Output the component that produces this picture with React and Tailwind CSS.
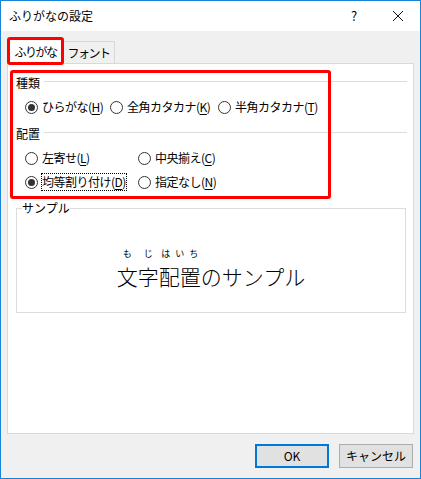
import React from "react";

const font = "font-['Noto_Sans_CJK_JP','Noto_Sans',sans-serif]";

const Radio = ({ checked }) => (
  <span className="w-[13px] h-[13px] rounded-full border border-[#333333] bg-white flex items-center justify-center shrink-0">
    {checked && <span className="w-[7px] h-[7px] rounded-full bg-[#333333]" />}
  </span>
);

const Option = ({ checked, label, keyChar, width, focus }) => (
  <label className={`flex items-center gap-[4px] shrink-0 ${width}`}>
    <Radio checked={checked} />
    <span className={`leading-[16px] tracking-[-0.5px] ${focus ? "outline outline-1 outline-dotted outline-black" : ""}`}>
      {label}(<span className="underline underline-offset-2">{keyChar}</span>)
    </span>
  </label>
);

const SectionHeader = ({ title }) => (
  <div className="flex items-center h-[16px] gap-[4px]">
    <span className="leading-[16px]">{title}</span>
    <div className="flex-1 h-px bg-[#dcdcdc] mt-[-3px]" />
  </div>
);

const Ruby = ({ base, reading, spread }) => (
  <span className="flex flex-col items-stretch">
    <span className={`flex h-[10px] text-[9px] leading-[10px] ${spread ? "justify-around" : "justify-center"}`}>
      {reading.split("").map((c, i) => (
        <span key={i}>{c}</span>
      ))}
    </span>
    <span className="mt-[5px] text-[21px] leading-[24px] font-light">{base}</span>
  </span>
);

export default function App() {
  return (
    <div className={`w-[421px] h-[479px] border border-[#1883d7] bg-[#f0f0f0] flex flex-col text-[12px] text-black ${font}`}>
      {/* title bar */}
      <div className="h-[30px] bg-white flex items-center pl-[8px] shrink-0">
        <span className="flex-1 leading-[16px]">ふりがなの設定</span>
        <span className="w-[16px] text-center text-[13px] mr-[30px]">?</span>
        <svg width="12" height="12" viewBox="0 0 12 12" className="mr-[16px]">
          <path d="M1 1 L11 11 M11 1 L1 11" stroke="#111" strokeWidth="1" />
        </svg>
      </div>

      {/* body */}
      <div className="flex-1 flex flex-col px-[6px] pt-[8px]">
        {/* tabs */}
        <div className="flex items-end h-[25px] -mb-px ml-[1px]">
          <div className="relative z-10 w-[55px] h-[25px] bg-white border border-b-0 border-[#d9d9d9] flex items-center justify-center tracking-[-1.5px]">
            ふりがな
            <div className="absolute -left-[2px] -right-[2px] -top-[3px] -bottom-[1px] border-[3px] border-[#ff0000] rounded-[3px]" />
          </div>
          <div className="w-[52px] h-[22px] mb-px bg-[#f0f0f0] border border-l-0 border-b-0 border-[#d9d9d9] flex items-center justify-center tracking-[-1.5px]">
            フォント
          </div>
        </div>

        {/* panel */}
        <div className="relative h-[371px] bg-white border border-[#d9d9d9] pl-[8px] pr-[6px] pt-[11px]">
          <SectionHeader title="種類" />
          <div className="flex items-center h-[16px] mt-[8px] pl-[9px]">
            <Option checked label="ひらがな" keyChar="H" width="w-[85px]" />
            <Option label="全角カタカナ" keyChar="K" width="w-[108px]" />
            <Option label="半角カタカナ" keyChar="T" width="w-[110px]" />
          </div>

          <div className="mt-[11px]">
            <SectionHeader title="配置" />
          </div>
          <div className="flex items-center h-[16px] mt-[8px] pl-[9px]">
            <Option label="左寄せ" keyChar="L" width="w-[113px]" />
            <Option label="中央揃え" keyChar="C" width="w-[100px]" />
          </div>
          <div className="flex items-center h-[16px] mt-[8px] pl-[9px]">
            <Option checked focus label="均等割り付け" keyChar="D" width="w-[113px]" />
            <Option label="指定なし" keyChar="N" width="w-[100px]" />
          </div>

          {/* sample */}
          <div className="relative mt-[18px] mr-[1px] h-[105px] border border-[#dcdcdc] flex justify-center pt-[40px]">
            <span className="absolute left-[5px] -top-[8px] bg-white leading-[14px]">サンプル</span>
            <div className="flex items-start">
              <Ruby base="文" reading="も" />
              <Ruby base="字" reading="じ" />
              <Ruby base="配置" reading="はいち" spread />
              <span className="mt-[15px] text-[21px] leading-[24px] font-light">のサンプル</span>
            </div>
          </div>

          {/* annotation box */}
          <div className="absolute left-[2px] top-[6px] w-[321px] h-[129px] border-[3px] border-[#ff0000] rounded-[3px]" />
        </div>

        {/* buttons */}
        <div className="flex justify-end gap-[10px] mt-[10px] pr-[1px]">
          <button className="w-[74px] h-[24px] bg-[#e1e1e1] border-2 border-[#0078d7] flex items-center justify-center">
            OK
          </button>
          <button className="w-[74px] h-[24px] bg-[#e1e1e1] border border-[#adadad] flex items-center justify-center">
            キャンセル
          </button>
        </div>
      </div>
    </div>
  );
}
